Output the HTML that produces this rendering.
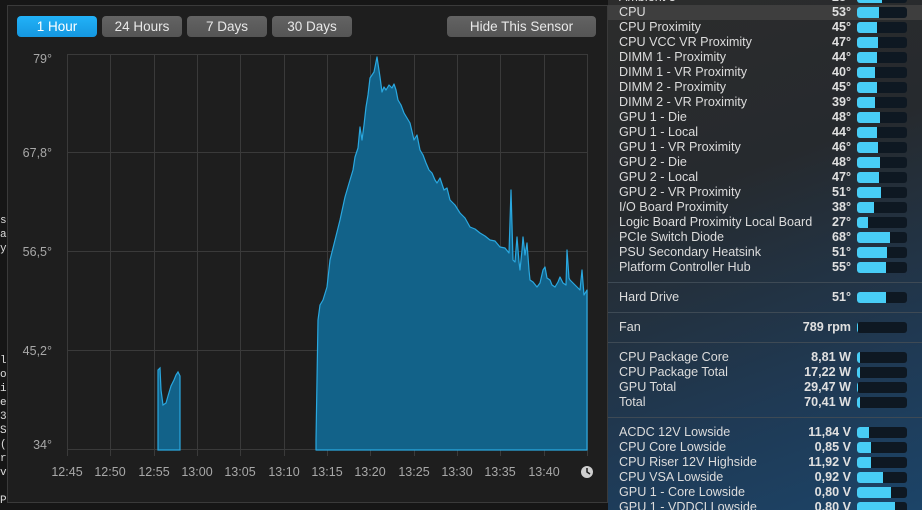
<!DOCTYPE html>
<html><head><meta charset="utf-8">
<style>
*{margin:0;padding:0;box-sizing:border-box}
body{width:922px;height:510px;overflow:hidden;background:#161616;font-family:"Liberation Sans",sans-serif;position:relative}
#left{position:absolute;left:7px;top:5px;width:601px;height:498px;background:#1e1e1e;border:1px solid #3a3a3a}
.btn{position:absolute;top:16px;height:21px;border-radius:4px;background:linear-gradient(#636363,#555);color:#e8e8e8;font-size:13.5px;text-align:center;line-height:21px}
.ylab{position:absolute;right:870px;color:#a8a8a8;font-size:12.5px;width:40px;text-align:right}
.xlab{position:absolute;top:465px;color:#a8a8a8;font-size:12.5px;width:40px;text-align:center}
#right{position:absolute;left:608px;top:0;width:314px;height:510px;background:linear-gradient(160deg,#2c2c2c 0%,#262a2e 35%,#1f3a55 75%,#1c4468 100%);overflow:hidden}
.row{position:absolute;left:0;width:314px;height:15px;font-size:12.6px;color:#dcdcdc}
.row .n{position:absolute;left:11px;top:0;line-height:15px;white-space:nowrap}
.row .v{position:absolute;right:71px;top:0;line-height:15px;font-weight:bold;color:#e0e0e0}
.row .b{position:absolute;left:249px;top:2px;width:50px;height:11px;background:#0e1822;border-radius:3px;overflow:hidden}
.row .b i{display:block;height:11px;background:#48cdf6}
.sep{position:absolute;left:0;width:314px;height:1px;background:#3e4a55}
.mono{position:absolute;left:0;font-family:"Liberation Mono",monospace;font-size:11px;color:#ddd;line-height:14px}
</style></head><body>
<div class="mono" style="top:214px">s<br>a<br>y</div>
<div class="mono" style="top:354px">l<br>o<br>i<br>e<br>3<br>S<br>(<br>r<br>v</div>
<div class="mono" style="top:494px">P</div>
<div id="left"></div>
<div class="btn" style="left:17px;width:80px;background:linear-gradient(#22b2f8,#1597e0);color:#fff">1 Hour</div>
<div class="btn" style="left:102px;width:80px">24 Hours</div>
<div class="btn" style="left:187px;width:80px">7 Days</div>
<div class="btn" style="left:272px;width:80px">30 Days</div>
<div class="btn" style="left:447px;width:149px">Hide This Sensor</div>
<div class="ylab" style="top:52px;left:12px">79°</div>
<div class="ylab" style="top:146px;left:12px">67,8°</div>
<div class="ylab" style="top:245px;left:12px">56,5°</div>
<div class="ylab" style="top:344px;left:12px">45,2°</div>
<div class="ylab" style="top:438px;left:12px">34°</div>
<svg style="position:absolute;left:0;top:0" width="608" height="510">
<g stroke="#3a3a3a" stroke-width="1">
<line x1="67.5" y1="54" x2="67.5" y2="456"/><line x1="110.5" y1="54" x2="110.5" y2="456"/><line x1="154.5" y1="54" x2="154.5" y2="456"/><line x1="197.5" y1="54" x2="197.5" y2="456"/><line x1="240.5" y1="54" x2="240.5" y2="456"/><line x1="284.5" y1="54" x2="284.5" y2="456"/><line x1="327.5" y1="54" x2="327.5" y2="456"/><line x1="370.5" y1="54" x2="370.5" y2="456"/><line x1="414.5" y1="54" x2="414.5" y2="456"/><line x1="457.5" y1="54" x2="457.5" y2="456"/><line x1="500.5" y1="54" x2="500.5" y2="456"/><line x1="544.5" y1="54" x2="544.5" y2="456"/><line x1="587.5" y1="54" x2="587.5" y2="456"/>
<line x1="67" y1="54.5" x2="588" y2="54.5"/><line x1="67" y1="152.5" x2="588" y2="152.5"/><line x1="67" y1="251.5" x2="588" y2="251.5"/><line x1="67" y1="350.5" x2="588" y2="350.5"/><line x1="67" y1="449.5" x2="588" y2="449.5"/>
</g>
<path d="M158,440 L158,370 L160,368 L161,390 L163,405 L166,403 L168,396 L171,386 L174,380 L176,375 L178,372 L180,376 L180,450 L158,450Z" fill="#126289" stroke="#2aa8e0" stroke-width="1.2"/>
<path d="M316,440 L318,320 L320,305 L323,300 L327,287 L330,260 L335,240 L340,220 L345,197 L350,180 L353,170 L355,157 L358,148 L360,127 L362,140 L364,125 L366,107 L368,95 L370,78 L374,72 L377,57 L380,77 L382,92 L384,87 L386,90 L389,85 L392,88 L394,84 L396,90 L398,100 L401,105 L404,113 L407,118 L410,123 L414,140 L417,135 L420,150 L423,155 L426,163 L429,170 L432,173 L435,180 L437,183 L440,178 L444,190 L447,188 L450,200 L455,205 L460,213 L465,218 L470,227 L475,229 L480,233 L485,236 L490,240 L495,241 L500,247 L505,248 L509,253 L511,190 L513,260 L515,262 L517,237 L519,262 L520,270 L522,250 L523,237 L525,255 L527,243 L529,270 L530,280 L533,282 L537,287 L540,283 L543,270 L545,267 L547,278 L550,280 L552,285 L555,287 L558,282 L560,277 L563,283 L566,285 L567,250 L569,278 L570,280 L573,283 L577,287 L580,290 L582,270 L584,295 L587,290 L587,450 L316,450Z" fill="#126289" stroke="#2aa8e0" stroke-width="1.2" stroke-linejoin="round"/>
<circle cx="587" cy="472" r="6" fill="#cfcfcf"/>
<path d="M587,468 L587,472 L590,474" stroke="#1e1e1e" stroke-width="1.5" fill="none"/>
</svg>
<div class="xlab" style="left:47px">12:45</div>
<div class="xlab" style="left:90px">12:50</div>
<div class="xlab" style="left:134px">12:55</div>
<div class="xlab" style="left:177px">13:00</div>
<div class="xlab" style="left:220px">13:05</div>
<div class="xlab" style="left:264px">13:10</div>
<div class="xlab" style="left:307px">13:15</div>
<div class="xlab" style="left:350px">13:20</div>
<div class="xlab" style="left:394px">13:25</div>
<div class="xlab" style="left:437px">13:30</div>
<div class="xlab" style="left:480px">13:35</div>
<div class="xlab" style="left:524px">13:40</div>
<div id="right">
<div class="row" style="top:-10px"><span class="n">Ambient 3</span><span class="v">28°</span><span class="b"><i style="width:25px"></i></span></div>
<div class="row" style="top:5px;background:#3e3e3e"><span class="n">CPU</span><span class="v">53°</span><span class="b"><i style="width:22px"></i></span></div>
<div class="row" style="top:20px"><span class="n">CPU Proximity</span><span class="v">45°</span><span class="b"><i style="width:20px"></i></span></div>
<div class="row" style="top:35px"><span class="n">CPU VCC VR Proximity</span><span class="v">47°</span><span class="b"><i style="width:21px"></i></span></div>
<div class="row" style="top:50px"><span class="n">DIMM 1 - Proximity</span><span class="v">44°</span><span class="b"><i style="width:20px"></i></span></div>
<div class="row" style="top:65px"><span class="n">DIMM 1 - VR Proximity</span><span class="v">40°</span><span class="b"><i style="width:18px"></i></span></div>
<div class="row" style="top:80px"><span class="n">DIMM 2 - Proximity</span><span class="v">45°</span><span class="b"><i style="width:20px"></i></span></div>
<div class="row" style="top:95px"><span class="n">DIMM 2 - VR Proximity</span><span class="v">39°</span><span class="b"><i style="width:18px"></i></span></div>
<div class="row" style="top:110px"><span class="n">GPU 1 - Die</span><span class="v">48°</span><span class="b"><i style="width:23px"></i></span></div>
<div class="row" style="top:125px"><span class="n">GPU 1 - Local</span><span class="v">44°</span><span class="b"><i style="width:20px"></i></span></div>
<div class="row" style="top:140px"><span class="n">GPU 1 - VR Proximity</span><span class="v">46°</span><span class="b"><i style="width:21px"></i></span></div>
<div class="row" style="top:155px"><span class="n">GPU 2 - Die</span><span class="v">48°</span><span class="b"><i style="width:23px"></i></span></div>
<div class="row" style="top:170px"><span class="n">GPU 2 - Local</span><span class="v">47°</span><span class="b"><i style="width:22px"></i></span></div>
<div class="row" style="top:185px"><span class="n">GPU 2 - VR Proximity</span><span class="v">51°</span><span class="b"><i style="width:24px"></i></span></div>
<div class="row" style="top:200px"><span class="n">I/O Board Proximity</span><span class="v">38°</span><span class="b"><i style="width:17px"></i></span></div>
<div class="row" style="top:215px"><span class="n">Logic Board Proximity Local Board</span><span class="v">27°</span><span class="b"><i style="width:11px"></i></span></div>
<div class="row" style="top:230px"><span class="n">PCIe Switch Diode</span><span class="v">68°</span><span class="b"><i style="width:33px"></i></span></div>
<div class="row" style="top:245px"><span class="n">PSU Secondary Heatsink</span><span class="v">51°</span><span class="b"><i style="width:30px"></i></span></div>
<div class="row" style="top:260px"><span class="n">Platform Controller Hub</span><span class="v">55°</span><span class="b"><i style="width:29px"></i></span></div>
<div class="sep" style="top:282px"></div>
<div class="row" style="top:290px"><span class="n">Hard Drive</span><span class="v">51°</span><span class="b"><i style="width:29px"></i></span></div>
<div class="sep" style="top:312px"></div>
<div class="row" style="top:320px"><span class="n">Fan</span><span class="v">789 rpm</span><span class="b"><i style="width:1px"></i></span></div>
<div class="sep" style="top:342px"></div>
<div class="row" style="top:350px"><span class="n">CPU Package Core</span><span class="v">8,81 W</span><span class="b"><i style="width:3px"></i></span></div>
<div class="row" style="top:365px"><span class="n">CPU Package Total</span><span class="v">17,22 W</span><span class="b"><i style="width:3px"></i></span></div>
<div class="row" style="top:380px"><span class="n">GPU Total</span><span class="v">29,47 W</span><span class="b"><i style="width:1px"></i></span></div>
<div class="row" style="top:395px"><span class="n">Total</span><span class="v">70,41 W</span><span class="b"><i style="width:3px"></i></span></div>
<div class="sep" style="top:417px"></div>
<div class="row" style="top:425px"><span class="n">ACDC 12V Lowside</span><span class="v">11,84 V</span><span class="b"><i style="width:12px"></i></span></div>
<div class="row" style="top:440px"><span class="n">CPU Core Lowside</span><span class="v">0,85 V</span><span class="b"><i style="width:14px"></i></span></div>
<div class="row" style="top:455px"><span class="n">CPU Riser 12V Highside</span><span class="v">11,92 V</span><span class="b"><i style="width:14px"></i></span></div>
<div class="row" style="top:470px"><span class="n">CPU VSA Lowside</span><span class="v">0,92 V</span><span class="b"><i style="width:26px"></i></span></div>
<div class="row" style="top:485px"><span class="n">GPU 1 - Core Lowside</span><span class="v">0,80 V</span><span class="b"><i style="width:34px"></i></span></div>
<div class="row" style="top:500px"><span class="n">GPU 1 - VDDCI Lowside</span><span class="v">0,80 V</span><span class="b"><i style="width:38px"></i></span></div>
</div>
</body></html>
